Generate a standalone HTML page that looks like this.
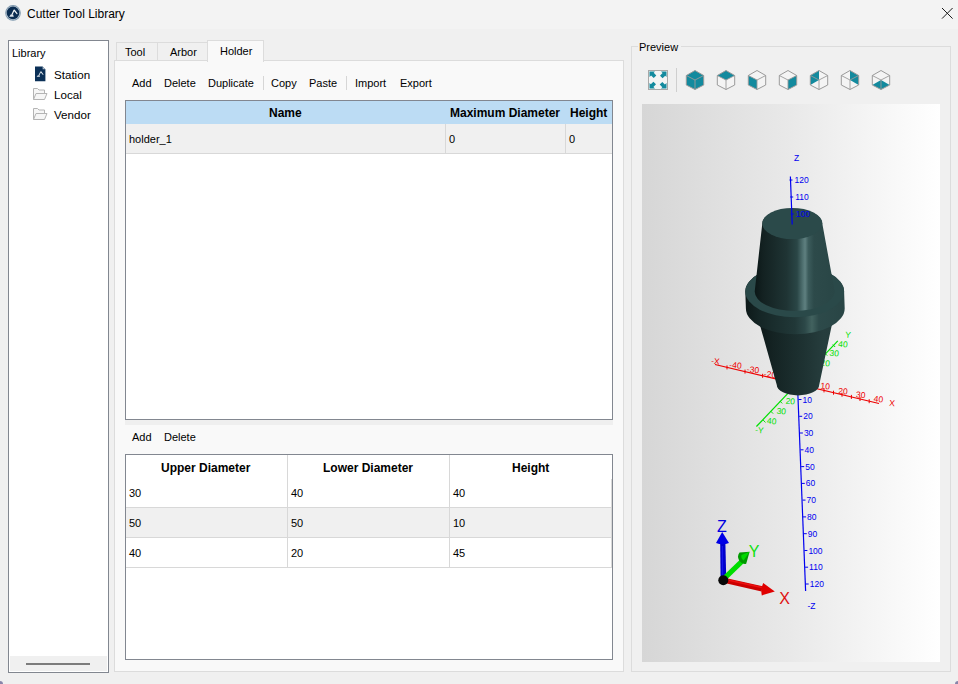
<!DOCTYPE html>
<html><head><meta charset="utf-8">
<style>
html,body{margin:0;padding:0}
body{width:958px;height:684px;position:relative;overflow:hidden;background:#f0f0f0;font-family:"Liberation Sans",sans-serif;color:#000}
.a{position:absolute}
.t{position:absolute;white-space:nowrap;font-size:11px;line-height:14px}
.b{font-weight:bold;font-size:12px}
</style></head><body>
<!-- title bar -->
<div class="a" style="left:0;top:0;width:958px;height:29px;background:#f3f3f3"></div>
<svg class="a" style="left:5px;top:5px" width="17" height="17" viewBox="0 0 17 17">
<circle cx="8" cy="7.9" r="7.8" fill="#7d97ad"/>
<circle cx="8" cy="7.9" r="7" fill="#b9c7d3"/>
<circle cx="8" cy="7.9" r="6.3" fill="#0b2d52"/>
<path d="M4.2 11.8 L8.8 11.8 L8.1 9.6 L5.6 9.6 Z" fill="#dfe6ec"/>
<path d="M6.2 9.8 L8.6 4.8 L9.6 4.5 L12.6 8.6 L12 9.6 L9.2 6.2 L7.6 9.8 Z" fill="#f2f5f7"/>
</svg>
<div class="t" style="left:27px;top:7px;font-size:12px">Cutter Tool Library</div>
<svg class="a" style="left:941px;top:7px" width="13" height="13" viewBox="0 0 13 13"><path d="M1 1 L11.6 11.6 M11.6 1 L1 11.6" stroke="#1a1a1a" stroke-width="1"/></svg>

<!-- library panel -->
<div class="a" style="left:8px;top:40px;width:99px;height:631px;border:1px solid #828790;background:#fff"></div>
<div class="a" style="left:10px;top:656px;width:97px;height:15px;background:#f0f0f0"></div>
<div class="a" style="left:26px;top:663px;width:64px;height:2px;background:#7c7c7c"></div>
<div class="t" style="left:12px;top:46px">Library</div>
<svg class="a" style="left:34px;top:66px" width="12" height="16" viewBox="0 0 12 16">
<path d="M1 0.5 H8.6 L11.4 3.3 V15.2 H1 Z" fill="#0b3057"/>
<path d="M8.6 0.5 V3.3 H11.4 Z" fill="#b7c3cf"/>
<path d="M2.6 10.8 L6 10.8 L5.6 9.6 L3.6 9.6 Z" fill="#e6ebf0"/>
<path d="M4.2 9.8 L6.4 5.4 L7.2 5.2 L9.6 8.4 L9 8.9 L6.8 6.6 L5.2 9.8 Z" fill="#e6ebf0"/>
</svg>
<div class="t" style="left:54px;top:68px;font-size:11.6px">Station</div>
<svg class="a" style="left:32px;top:87px" width="16" height="14" viewBox="0 0 16 14">
<path d="M1.5 12.5 V1.5 H5.5 L7 3 H12.5 V6.5" fill="#f6f6f6" stroke="#b4b4b4"/>
<path d="M1.5 12.5 L4 6.5 H15 L12.5 12.5 Z" fill="#f6f6f6" stroke="#b4b4b4"/>
</svg>
<div class="t" style="left:54px;top:88px;font-size:11.6px">Local</div>
<svg class="a" style="left:32px;top:107px" width="16" height="14" viewBox="0 0 16 14">
<path d="M1.5 12.5 V1.5 H5.5 L7 3 H12.5 V6.5" fill="#f6f6f6" stroke="#b4b4b4"/>
<path d="M1.5 12.5 L4 6.5 H15 L12.5 12.5 Z" fill="#f6f6f6" stroke="#b4b4b4"/>
</svg>
<div class="t" style="left:54px;top:108px;font-size:11.6px">Vendor</div>

<!-- tabs -->
<div class="a" style="left:114px;top:60px;width:508px;height:610px;border:1px solid #dcdcdc;background:#f9f9f9"></div>
<div class="a" style="left:116px;top:42px;width:40px;height:17px;border:1px solid #dcdcdc;border-bottom:none;background:#f0f0f0"></div>
<div class="a" style="left:158px;top:42px;width:49px;height:17px;border:1px solid #dcdcdc;border-bottom:none;border-left:none;background:#f0f0f0"></div>
<div class="a" style="left:207px;top:40px;width:55px;height:21px;border:1px solid #dcdcdc;border-bottom:none;background:#f9f9f9"></div>
<div class="t" style="left:125px;top:45px">Tool</div>
<div class="t" style="left:170px;top:45px">Arbor</div>
<div class="t" style="left:220px;top:44px">Holder</div>

<!-- toolbar 1 -->
<div class="t" style="left:132px;top:76px">Add</div>
<div class="t" style="left:164px;top:76px">Delete</div>
<div class="t" style="left:208px;top:76px">Duplicate</div>
<div class="a" style="left:263px;top:76px;width:1px;height:14px;background:#d6d6d6"></div>
<div class="t" style="left:271px;top:76px">Copy</div>
<div class="t" style="left:309px;top:76px">Paste</div>
<div class="a" style="left:346px;top:76px;width:1px;height:14px;background:#d6d6d6"></div>
<div class="t" style="left:355px;top:76px">Import</div>
<div class="t" style="left:400px;top:76px">Export</div>

<!-- table 1 -->
<div class="a" style="left:125px;top:100px;width:486px;height:318px;border:1px solid #828790;background:#fff"></div>
<div class="a" style="left:126px;top:101px;width:486px;height:23px;background:#bcdcf4"></div>
<div class="a" style="left:126px;top:124px;width:486px;height:29px;background:#f0f0f0"></div>
<div class="a" style="left:126px;top:153px;width:486px;height:1px;background:#d8d8d8"></div>
<div class="a" style="left:445px;top:124px;width:1px;height:29px;background:#d8d8d8"></div>
<div class="a" style="left:565px;top:124px;width:1px;height:29px;background:#d8d8d8"></div>
<div class="t b" style="left:269px;top:106px">Name</div>
<div class="t b" style="left:450px;top:106px">Maximum Diameter</div>
<div class="t b" style="left:570px;top:106px">Height</div>
<div class="t" style="left:129px;top:132px">holder_1</div>
<div class="t" style="left:449px;top:132px">0</div>
<div class="t" style="left:569px;top:132px">0</div>
<div class="a" style="left:125px;top:420px;width:488px;height:5px;background:#efefef"></div>

<!-- toolbar 2 -->
<div class="t" style="left:132px;top:430px">Add</div>
<div class="t" style="left:164px;top:430px">Delete</div>

<!-- table 2 -->
<div class="a" style="left:125px;top:454px;width:486px;height:204px;border:1px solid #828790;background:#fff"></div>
<div class="a" style="left:126px;top:508px;width:485px;height:29px;background:#f0f0f0"></div>
<div class="a" style="left:126px;top:507px;width:486px;height:1px;background:#d8d8d8"></div>
<div class="a" style="left:126px;top:537px;width:486px;height:1px;background:#d8d8d8"></div>
<div class="a" style="left:126px;top:567px;width:486px;height:1px;background:#d8d8d8"></div>
<div class="a" style="left:287px;top:455px;width:1px;height:112px;background:#d8d8d8"></div>
<div class="a" style="left:449px;top:455px;width:1px;height:112px;background:#d8d8d8"></div>
<div class="a" style="left:611px;top:479px;width:1px;height:88px;background:#d8d8d8"></div>
<div class="t b" style="left:161px;top:461px">Upper Diameter</div>
<div class="t b" style="left:323px;top:461px">Lower Diameter</div>
<div class="t b" style="left:512px;top:461px">Height</div>
<div class="t" style="left:129px;top:486px">30</div>
<div class="t" style="left:291px;top:486px">40</div>
<div class="t" style="left:453px;top:486px">40</div>
<div class="t" style="left:129px;top:516px">50</div>
<div class="t" style="left:291px;top:516px">50</div>
<div class="t" style="left:453px;top:516px">10</div>
<div class="t" style="left:129px;top:546px">40</div>
<div class="t" style="left:291px;top:546px">20</div>
<div class="t" style="left:453px;top:546px">45</div>

<!-- preview group -->
<div class="a" style="left:631px;top:46px;width:318px;height:624px;border:1px solid #dcdcdc"></div>
<div class="a" style="left:638px;top:40px;width:43px;height:12px;background:#f0f0f0"></div>
<div class="t" style="left:639px;top:40px">Preview</div>
<div class="a" style="left:642px;top:104px;width:298px;height:558px;background:linear-gradient(to right,#d2d2d2,#fdfdfd)"></div>
<!-- corner -->
<div class="a" style="left:0;top:681px;width:3px;height:3px;border-radius:0 3px 0 0;background:#6f6a98;opacity:.8"></div>
<div class="a" style="left:955px;top:681px;width:3px;height:3px;border-radius:3px 0 0 0;background:#6f6a98;opacity:.8"></div>
<!--ICONS-->
<svg class="a" style="left:0;top:0" width="958" height="100" viewBox="0 0 958 100">
<rect x="648.5" y="70.5" width="19" height="19" fill="#f4f4f4" stroke="#a8a8a8"/>
<path d="M649.5 71.5 h5.5 l-1.3 1.3 l2.6 2.6 l-2.6 2.6 l-2.6 -2.6 l-1.6 1.6 z" fill="#138a9e"/>
<path d="M666.5 71.5 v5.5 l-1.3 -1.3 l-2.6 2.6 l-2.6 -2.6 l2.6 -2.6 l-1.6 -1.6 z" fill="#138a9e"/>
<path d="M649.5 88.5 v-5.5 l1.3 1.3 l2.6 -2.6 l2.6 2.6 l-2.6 2.6 l1.6 1.6 z" fill="#138a9e"/>
<path d="M666.5 88.5 h-5.5 l1.3 -1.3 l-2.6 -2.6 l2.6 -2.6 l2.6 2.6 l1.6 -1.6 z" fill="#138a9e"/>
<rect x="676" y="68" width="1" height="24" fill="#cfcfcf"/>
<polygon points="695.0,70.5 703.7,75.5 703.7,85.0 695.0,89.5 686.3,85.0 686.3,75.5" fill="#f4f4f4"/>
<polygon points="695.0,70.5 703.7,75.5 703.7,85.0 695.0,89.5 686.3,85.0 686.3,75.5" fill="#138a9e"/>
<polygon points="695.0,70.5 703.7,75.5 703.7,85.0 695.0,89.5 686.3,85.0 686.3,75.5" fill="none" stroke="#9a9a9a" stroke-width="1"/>
<path d="M686.3 75.5 L695.0 80.0 L703.7 75.5 M695.0 80.0 V89.5" fill="none" stroke="#9a9a9a" stroke-width="0.9"/>
<polygon points="726.0,70.5 734.7,75.5 734.7,85.0 726.0,89.5 717.3,85.0 717.3,75.5" fill="#f4f4f4"/>
<polygon points="726.0,70.5 734.7,75.5 726.0,80.0 717.3,75.5" fill="#138a9e"/>
<polygon points="726.0,70.5 734.7,75.5 734.7,85.0 726.0,89.5 717.3,85.0 717.3,75.5" fill="none" stroke="#9a9a9a" stroke-width="1"/>
<path d="M717.3 75.5 L726.0 80.0 L734.7 75.5 M726.0 80.0 V89.5" fill="none" stroke="#9a9a9a" stroke-width="0.9"/>
<polygon points="757.0,70.5 765.7,75.5 765.7,85.0 757.0,89.5 748.3,85.0 748.3,75.5" fill="#f4f4f4"/>
<polygon points="748.3,75.5 757.0,80.0 757.0,89.5 748.3,85.0" fill="#138a9e"/>
<polygon points="757.0,70.5 765.7,75.5 765.7,85.0 757.0,89.5 748.3,85.0 748.3,75.5" fill="none" stroke="#9a9a9a" stroke-width="1"/>
<path d="M748.3 75.5 L757.0 80.0 L765.7 75.5 M757.0 80.0 V89.5" fill="none" stroke="#9a9a9a" stroke-width="0.9"/>
<polygon points="788.0,70.5 796.7,75.5 796.7,85.0 788.0,89.5 779.3,85.0 779.3,75.5" fill="#f4f4f4"/>
<polygon points="788.0,80.0 796.7,75.5 796.7,85.0 788.0,89.5" fill="#138a9e"/>
<polygon points="788.0,70.5 796.7,75.5 796.7,85.0 788.0,89.5 779.3,85.0 779.3,75.5" fill="none" stroke="#9a9a9a" stroke-width="1"/>
<path d="M779.3 75.5 L788.0 80.0 L796.7 75.5 M788.0 80.0 V89.5" fill="none" stroke="#9a9a9a" stroke-width="0.9"/>
<polygon points="819.0,70.5 827.7,75.5 827.7,85.0 819.0,89.5 810.3,85.0 810.3,75.5" fill="#f4f4f4"/>
<polygon points="819.0,70.5 810.3,75.5 810.3,85.0 819.0,80.0" fill="#138a9e"/>
<polygon points="819.0,70.5 827.7,75.5 827.7,85.0 819.0,89.5 810.3,85.0 810.3,75.5" fill="none" stroke="#9a9a9a" stroke-width="1"/>
<path d="M810.3 75.5 L819.0 80.0 L827.7 75.5 M819.0 80.0 V89.5" fill="none" stroke="#9a9a9a" stroke-width="0.9"/>
<polygon points="850.0,70.5 858.7,75.5 858.7,85.0 850.0,89.5 841.3,85.0 841.3,75.5" fill="#f4f4f4"/>
<polygon points="850.0,70.5 850.0,80.0 858.7,85.0 858.7,75.5" fill="#138a9e"/>
<polygon points="850.0,70.5 858.7,75.5 858.7,85.0 850.0,89.5 841.3,85.0 841.3,75.5" fill="none" stroke="#9a9a9a" stroke-width="1"/>
<path d="M841.3 75.5 L850.0 80.0 L858.7 75.5 M850.0 80.0 V89.5" fill="none" stroke="#9a9a9a" stroke-width="0.9"/>
<polygon points="881.0,70.5 889.7,75.5 889.7,85.0 881.0,89.5 872.3,85.0 872.3,75.5" fill="#f4f4f4"/>
<polygon points="872.3,85.0 881.0,80.0 889.7,85.0 881.0,89.5" fill="#138a9e"/>
<polygon points="881.0,70.5 889.7,75.5 889.7,85.0 881.0,89.5 872.3,85.0 872.3,75.5" fill="none" stroke="#9a9a9a" stroke-width="1"/>
<path d="M872.3 75.5 L881.0 80.0 L889.7 75.5 M881.0 80.0 V89.5" fill="none" stroke="#9a9a9a" stroke-width="0.9"/>
</svg>
<!--/ICONS-->
<!--VP-->
<svg class="a" style="left:642px;top:104px" width="298" height="558" viewBox="642 104 298 558">
<defs>
<linearGradient id="bg" x1="0" x2="1" y1="0" y2="0">
<stop offset="0" stop-color="#d6d6d6"/><stop offset="0.5" stop-color="#e9e9e9"/><stop offset="1" stop-color="#ffffff"/></linearGradient>
<linearGradient id="side" x1="0" x2="1" y1="0" y2="0">
<stop offset="0" stop-color="#0a1616"/><stop offset="0.1" stop-color="#132121"/><stop offset="0.4" stop-color="#1f3434"/>
<stop offset="0.53" stop-color="#2a4646"/><stop offset="0.6" stop-color="#4f7070"/><stop offset="0.63" stop-color="#5f8080"/><stop offset="0.67" stop-color="#3c5c5c"/><stop offset="0.74" stop-color="#2d4a4a"/>
<stop offset="1" stop-color="#294646"/></linearGradient>
<linearGradient id="side2" x1="0" x2="1" y1="0" y2="0">
<stop offset="0" stop-color="#0d1919"/><stop offset="0.15" stop-color="#152626"/><stop offset="0.5" stop-color="#213838"/>
<stop offset="0.6" stop-color="#2c4848"/><stop offset="0.67" stop-color="#42625f"/><stop offset="0.74" stop-color="#2d4a4a"/>
<stop offset="1" stop-color="#294545"/></linearGradient>
<linearGradient id="side3" x1="0" x2="1" y1="0" y2="0">
<stop offset="0" stop-color="#0c1717"/><stop offset="0.22" stop-color="#142323"/><stop offset="0.6" stop-color="#1e3232"/>
<stop offset="0.85" stop-color="#263d3d"/><stop offset="1" stop-color="#253c3c"/></linearGradient>
</defs>
<rect x="642" y="104" width="298" height="558" fill="url(#bg)"/>
<line x1="715" y1="364.5" x2="879" y2="403.5" stroke="#ee0000" stroke-width="1.2"/>
<text x="715.5" y="364.1" fill="#ee0000" font-size="8.5" text-anchor="middle" font-family="Liberation Sans, sans-serif" transform="rotate(5.0 715.5 361.0)">-X</text>
<text x="735.5" y="368.1" fill="#ee0000" font-size="8.5" text-anchor="middle" font-family="Liberation Sans, sans-serif" transform="rotate(5.0 735.5 365.0)">-40</text>
<text x="753.0" y="372.6" fill="#ee0000" font-size="8.5" text-anchor="middle" font-family="Liberation Sans, sans-serif" transform="rotate(5.0 753.0 369.5)">-30</text>
<text x="770.0" y="377.4" fill="#ee0000" font-size="8.5" text-anchor="middle" font-family="Liberation Sans, sans-serif" transform="rotate(5.0 770.0 374.3)">-20</text>
<text x="825.3" y="388.9" fill="#ee0000" font-size="8.5" text-anchor="middle" font-family="Liberation Sans, sans-serif" transform="rotate(5.0 825.3 385.8)">10</text>
<text x="843.0" y="394.1" fill="#ee0000" font-size="8.5" text-anchor="middle" font-family="Liberation Sans, sans-serif" transform="rotate(5.0 843.0 391.0)">20</text>
<text x="860.8" y="397.8" fill="#ee0000" font-size="8.5" text-anchor="middle" font-family="Liberation Sans, sans-serif" transform="rotate(5.0 860.8 394.7)">30</text>
<text x="878.5" y="402.0" fill="#ee0000" font-size="8.5" text-anchor="middle" font-family="Liberation Sans, sans-serif" transform="rotate(5.0 878.5 398.9)">40</text>
<text x="892.0" y="406.1" fill="#ee0000" font-size="8.5" text-anchor="middle" font-family="Liberation Sans, sans-serif" transform="rotate(5.0 892.0 403.0)">X</text>
<line x1="727.0" y1="365.4" x2="727.0" y2="369.4" stroke="#ee0000" stroke-width="1"/>
<line x1="745.0" y1="369.6" x2="745.0" y2="373.6" stroke="#ee0000" stroke-width="1"/>
<line x1="762.6" y1="373.8" x2="762.6" y2="377.8" stroke="#ee0000" stroke-width="1"/>
<line x1="824.0" y1="388.4" x2="824.0" y2="392.4" stroke="#ee0000" stroke-width="1"/>
<line x1="833.5" y1="390.7" x2="833.5" y2="394.7" stroke="#ee0000" stroke-width="1"/>
<line x1="842.0" y1="392.7" x2="842.0" y2="396.7" stroke="#ee0000" stroke-width="1"/>
<line x1="851.4" y1="394.9" x2="851.4" y2="398.9" stroke="#ee0000" stroke-width="1"/>
<line x1="860.0" y1="397.0" x2="860.0" y2="401.0" stroke="#ee0000" stroke-width="1"/>
<line x1="869.2" y1="399.2" x2="869.2" y2="403.2" stroke="#ee0000" stroke-width="1"/>
<line x1="756.4" y1="426.5" x2="837.8" y2="340.9" stroke="#00e000" stroke-width="1.2"/>
<text x="848.2" y="337.7" fill="#00e000" font-size="8.5" text-anchor="middle" font-family="Liberation Sans, sans-serif" transform="rotate(5.0 848.2 334.6)">Y</text>
<text x="843.0" y="347.1" fill="#00e000" font-size="8.5" text-anchor="middle" font-family="Liberation Sans, sans-serif" transform="rotate(5.0 843.0 344.0)">40</text>
<text x="834.2" y="356.1" fill="#00e000" font-size="8.5" text-anchor="middle" font-family="Liberation Sans, sans-serif" transform="rotate(5.0 834.2 353.0)">30</text>
<text x="825.3" y="365.9" fill="#00e000" font-size="8.5" text-anchor="middle" font-family="Liberation Sans, sans-serif" transform="rotate(5.0 825.3 362.8)">20</text>
<text x="790.4" y="404.1" fill="#00e000" font-size="8.5" text-anchor="middle" font-family="Liberation Sans, sans-serif" transform="rotate(5.0 790.4 401.0)">20</text>
<text x="781.4" y="414.1" fill="#00e000" font-size="8.5" text-anchor="middle" font-family="Liberation Sans, sans-serif" transform="rotate(5.0 781.4 411.0)">30</text>
<text x="771.8" y="424.0" fill="#00e000" font-size="8.5" text-anchor="middle" font-family="Liberation Sans, sans-serif" transform="rotate(5.0 771.8 420.9)">40</text>
<text x="759.5" y="433.1" fill="#00e000" font-size="8.5" text-anchor="middle" font-family="Liberation Sans, sans-serif" transform="rotate(5.0 759.5 430.0)">-Y</text>
<line x1="763.1" y1="420.0" x2="765.5" y2="422.4" stroke="#00e000" stroke-width="1"/>
<line x1="770.7" y1="411.2" x2="773.1" y2="413.6" stroke="#00e000" stroke-width="1"/>
<line x1="779.8" y1="401.0" x2="782.2" y2="403.4" stroke="#00e000" stroke-width="1"/>
<line x1="824.8" y1="353.2" x2="827.2" y2="355.6" stroke="#00e000" stroke-width="1"/>
<line x1="832.8" y1="344.6" x2="835.2" y2="347.0" stroke="#00e000" stroke-width="1"/>
<line x1="797.5" y1="385" x2="805.6" y2="591" stroke="#0000f0" stroke-width="1.2"/>
<line x1="798.5" y1="399.5" x2="801.5" y2="399.5" stroke="#0000f0" stroke-width="1"/>
<text x="802.5" y="402.6" fill="#0000f0" font-size="8.5" text-anchor="start" font-family="Liberation Sans, sans-serif">10</text>
<line x1="799.2" y1="416.3" x2="802.2" y2="416.3" stroke="#0000f0" stroke-width="1"/>
<text x="803.2" y="419.3" fill="#0000f0" font-size="8.5" text-anchor="start" font-family="Liberation Sans, sans-serif">20</text>
<line x1="799.9" y1="433.0" x2="802.9" y2="433.0" stroke="#0000f0" stroke-width="1"/>
<text x="803.9" y="436.1" fill="#0000f0" font-size="8.5" text-anchor="start" font-family="Liberation Sans, sans-serif">30</text>
<line x1="800.5" y1="449.8" x2="803.5" y2="449.8" stroke="#0000f0" stroke-width="1"/>
<text x="804.5" y="452.9" fill="#0000f0" font-size="8.5" text-anchor="start" font-family="Liberation Sans, sans-serif">40</text>
<line x1="801.2" y1="466.6" x2="804.2" y2="466.6" stroke="#0000f0" stroke-width="1"/>
<text x="805.2" y="469.7" fill="#0000f0" font-size="8.5" text-anchor="start" font-family="Liberation Sans, sans-serif">50</text>
<line x1="801.8" y1="483.4" x2="804.8" y2="483.4" stroke="#0000f0" stroke-width="1"/>
<text x="805.8" y="486.4" fill="#0000f0" font-size="8.5" text-anchor="start" font-family="Liberation Sans, sans-serif">60</text>
<line x1="802.5" y1="500.1" x2="805.5" y2="500.1" stroke="#0000f0" stroke-width="1"/>
<text x="806.5" y="503.2" fill="#0000f0" font-size="8.5" text-anchor="start" font-family="Liberation Sans, sans-serif">70</text>
<line x1="803.1" y1="516.9" x2="806.1" y2="516.9" stroke="#0000f0" stroke-width="1"/>
<text x="807.1" y="520.0" fill="#0000f0" font-size="8.5" text-anchor="start" font-family="Liberation Sans, sans-serif">80</text>
<line x1="803.8" y1="533.7" x2="806.8" y2="533.7" stroke="#0000f0" stroke-width="1"/>
<text x="807.8" y="536.7" fill="#0000f0" font-size="8.5" text-anchor="start" font-family="Liberation Sans, sans-serif">90</text>
<line x1="804.4" y1="550.5" x2="807.4" y2="550.5" stroke="#0000f0" stroke-width="1"/>
<text x="808.4" y="553.5" fill="#0000f0" font-size="8.5" text-anchor="start" font-family="Liberation Sans, sans-serif">100</text>
<line x1="805.1" y1="567.2" x2="808.1" y2="567.2" stroke="#0000f0" stroke-width="1"/>
<text x="809.1" y="570.3" fill="#0000f0" font-size="8.5" text-anchor="start" font-family="Liberation Sans, sans-serif">110</text>
<line x1="805.7" y1="584.0" x2="808.7" y2="584.0" stroke="#0000f0" stroke-width="1"/>
<text x="809.7" y="587.1" fill="#0000f0" font-size="8.5" text-anchor="start" font-family="Liberation Sans, sans-serif">120</text>
<text x="811.5" y="608.6" fill="#0000f0" font-size="8.5" text-anchor="middle" font-family="Liberation Sans, sans-serif">-Z</text>
<path d="M776.80 385.00 A21.20 10.39 0 0 0 819.20 385.00 L835.30 308.50 A40.00 19.60 0 0 0 755.30 308.50 Z" fill="url(#side3)"/>
<path d="M745.90 308.50 A49.40 25.69 0 0 0 844.70 308.50 L844.10 291.50 A49.40 25.69 0 0 0 745.30 291.50 Z" fill="url(#side2)"/>
<ellipse cx="794.70" cy="291.50" rx="49.40" ry="25.69" fill="#2a4949"/>
<path d="M754.70 291.50 A40.00 19.60 0 0 0 834.70 291.50 L822.30 223.50 A30.00 14.70 0 0 0 762.30 223.50 Z" fill="url(#side)"/>
<ellipse cx="792.30" cy="223.50" rx="30.00" ry="15.60" fill="#2b4a4a"/>
<line x1="792.2" y1="224.5" x2="790.4" y2="176.5" stroke="#0000f0" stroke-width="1.2"/>
<line x1="789.5" y1="180.0" x2="792.5" y2="180.0" stroke="#0000f0" stroke-width="1"/>
<text x="794.5" y="183.1" fill="#0000f0" font-size="8.5" text-anchor="start" font-family="Liberation Sans, sans-serif">120</text>
<line x1="790.2" y1="197.0" x2="793.2" y2="197.0" stroke="#0000f0" stroke-width="1"/>
<text x="795.2" y="200.1" fill="#0000f0" font-size="8.5" text-anchor="start" font-family="Liberation Sans, sans-serif">110</text>
<line x1="790.8" y1="214.0" x2="793.8" y2="214.0" stroke="#0000f0" stroke-width="1"/>
<text x="795.8" y="217.1" fill="#0000f0" font-size="8.5" text-anchor="start" font-family="Liberation Sans, sans-serif">100</text>
<text x="796.5" y="161.1" fill="#0000f0" font-size="8.5" text-anchor="middle" font-family="Liberation Sans, sans-serif">Z</text>
<polygon points="720.6,580 726.3,580 725.4,544 720.2,544" fill="#0000cc"/>
<line x1="722.6" y1="578" x2="722.4" y2="546" stroke="#2020ff" stroke-width="1.2" opacity="0.6"/>
<path d="M722.2 532 L716 543 Q722.5 545.5 729 543 Z" fill="#0000e6"/>
<polygon points="721.5,577.5 724.8,581.5 746.5,560.5 743,556.8" fill="#00dd00"/>
<path d="M749.6 551.8 L739.5 552.6 Q736.6 556.4 739.5 561 Q742.8 565 746.2 563.8 Z" fill="#009a00"/>
<path d="M749.6 551.8 L741.5 555 Q740.5 558 743.6 560.6 Z" fill="#00d800"/>
<polygon points="723.3,577.6 722.4,582.6 761.6,591.6 762.6,586.2" fill="#cc0000"/>
<line x1="723.5" y1="579" x2="762" y2="587.6" stroke="#ee1010" stroke-width="1.5"/>
<path d="M774.8 591.6 L763.2 583 Q760.4 589 761.8 595.4 Z" fill="#e00000"/>
<circle cx="723.3" cy="580.3" r="5" fill="#080808"/>
<text x="722.0" y="531.8" fill="#0000e0" font-size="16.0" text-anchor="middle" font-family="Liberation Sans, sans-serif">Z</text>
<text x="754.0" y="556.8" fill="#10e010" font-size="16.0" text-anchor="middle" font-family="Liberation Sans, sans-serif">Y</text>
<text x="784.7" y="603.8" fill="#e01010" font-size="16.0" text-anchor="middle" font-family="Liberation Sans, sans-serif">X</text>
</svg>
<!--/VP-->
</body></html>
